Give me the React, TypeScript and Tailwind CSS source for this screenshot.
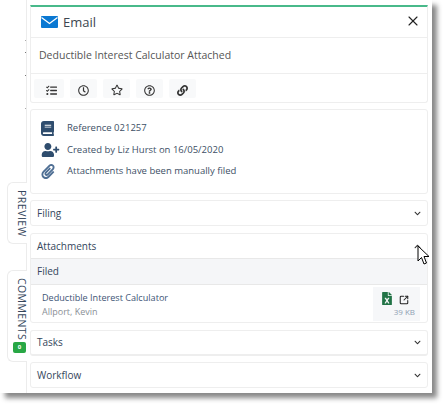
import React from "react";
import { FaBook, FaUserPlus, FaPaperclip, FaTasks, FaRegClock, FaRegStar, FaRegQuestionCircle, FaLink, FaChevronDown, FaChevronUp, FaFileExcel } from "react-icons/fa";
import { X, SquareArrowOutUpRight } from "lucide-react";

function Row({ title, open, height = "h-[26px]", className = "" }: { title: string; open?: boolean; height?: string; className?: string }) {
  return (
    <div className={`flex ${height} items-center justify-between pl-[6px] pr-[6px] ${className}`}>
      <span className="text-[10px] font-medium text-[#34465c]">{title}</span>
      {open ? <FaChevronUp className="h-[7px] w-[7px] text-[#333]" /> : <FaChevronDown className="h-[7px] w-[7px] text-[#333]" />}
    </div>
  );
}

const tool = "flex h-[19px] items-center justify-center rounded-[2px] bg-[#f8f9fa] pt-[3px] text-[#333]";

export default function App() {
  return (
    <div className="h-[405px] w-[444px] bg-white font-['Open_Sans',sans-serif]">
      <div className="flex h-[393px] w-[432px] bg-white shadow-[5px_5px_5px_#888888]">
        <div className="flex w-[30px] shrink-0 flex-col">
          <div className="h-[182px] w-[27px] border-r border-[#ececec]" />
          <div className="ml-[7px] flex h-[62px] w-[20px] items-center justify-center rounded-l-[6px] border border-r-0 border-[#ececec] bg-white pl-[4px]">
            <span className="ml-[3px] text-[10.5px] font-medium tracking-[0.5px] text-[#34465c] [writing-mode:vertical-rl]">PREVIEW</span>
          </div>
          <div className="h-[26px] w-[27px] border-r border-[#ececec]" />
          <div className="ml-[7px] flex h-[92px] w-[20px] flex-col items-center rounded-l-[6px] border border-r-0 border-[#ececec] bg-white pl-[4px] pt-[7px]">
            <span className="ml-[3px] text-[10.5px] font-medium leading-[15px] tracking-[0.4px] text-[#34465c] [writing-mode:vertical-rl]">COMMENTS</span>
            <span className="mt-[2px] flex h-[11px] w-[13px] items-center justify-center rounded-[2px] bg-[#28a745] text-[6px] font-bold text-white">0</span>
          </div>
          <div className="w-[27px] flex-1 border-r border-[#ececec]" />
        </div>

        <div className="flex w-[398px] flex-col pt-[5px]">
          <div className="h-[98px] rounded-b-[3px] border-x border-b border-t-[2px] border-[#eeeeee] border-t-[#48b98a]">
            <div className="flex h-[31px] items-center justify-between border-b border-[#eeeeee] pl-[10px] pr-[6px]">
              <div className="flex items-center gap-[5px]">
                <svg width="17" height="12" viewBox="0 0 17 12">
                  <rect width="17" height="12" rx="1" fill="#0a78d2" />
                  <path d="M0.5 1.5 L8.5 7.5 L16.5 1.5" fill="none" stroke="#fff" strokeWidth="1.3" />
                </svg>
                <span className="pt-[1px] text-[13px] text-[#3c4650]">Email</span>
              </div>
              <X className="mb-[3px] h-[16px] w-[16px] text-[#222]" strokeWidth={1.7} />
            </div>
            <div className="flex h-[36px] items-center border-b border-[#eeeeee] pl-[8px] pt-[1px] text-[10.5px] text-[#555]">
              Deductible Interest Calculator Attached
            </div>
            <div className="flex items-center gap-[6px] pl-[3px] pt-[5px]">
              <div className={`${tool} w-[30px] pl-[5px]`}><FaTasks className="h-[11px] w-[11px]" /></div>
              <div className={`${tool} w-[27px]`}><FaRegClock className="h-[11px] w-[11px]" /></div>
              <div className={`${tool} w-[27px]`}><FaRegStar className="h-[12px] w-[12px]" /></div>
              <div className={`${tool} w-[27px]`}><FaRegQuestionCircle className="h-[11px] w-[11px]" /></div>
              <div className={`${tool} w-[27px]`}><FaLink className="h-[11px] w-[11px]" /></div>
            </div>
          </div>

          <div className="mt-[6px] flex h-[85px] flex-col rounded-[3px] border border-[#eeeeee] pl-[10px] pt-[8px] text-[#3d4f66]">
            <div className="flex h-[21px] items-center">
              <FaBook className="h-[15px] w-[13px] text-[#2f4d6e]" />
              <span className="ml-[13px] text-[9.5px]">Reference 021257</span>
            </div>
            <div className="flex h-[22px] items-center">
              <FaUserPlus className="h-[14px] w-[19px] text-[#2f4d6e]" />
              <span className="ml-[7px] text-[9.5px]">Created by Liz Hurst on 16/05/2020</span>
            </div>
            <div className="flex h-[21px] items-center">
              <FaPaperclip className="h-[15px] w-[14px] text-[#4f6f94]" />
              <span className="ml-[12px] text-[9.5px]">Attachments have been manually filed</span>
            </div>
          </div>

          <Row title="Filing" className="mt-[6px] rounded-[3px] border border-[#eeeeee]" />

          <div className="mt-[7px] h-[90px] rounded-[3px] border border-[#eeeeee]">
            <Row title="Attachments" open height="h-[24px]" />
            <div className="flex h-[27px] items-center border-y border-[#e8e8e8] bg-[#f5f6f8] pl-[6px] text-[10px] font-medium text-[#34465c]">Filed</div>
            <div className="flex h-[37px] items-center justify-between pl-[11px] pr-[7px]">
              <div className="flex flex-col pt-[2px]">
                <span className="text-[9.1px] font-medium leading-[14px] text-[#3d5475]">Deductible Interest Calculator</span>
                <span className="text-[9px] leading-[14px] text-[#8a8f96]">Allport, Kevin</span>
              </div>
              <div className="flex h-[34px] w-[47px] flex-col items-end bg-[#f6f7f9] pr-[5px] pt-[5px]">
                <div className="flex items-start gap-[7px] pr-[6px]">
                  <FaFileExcel className="h-[13px] w-[10px] text-[#217346]" />
                  <SquareArrowOutUpRight className="mt-[3px] h-[10px] w-[10px] text-[#222]" strokeWidth={2.5} />
                </div>
                <span className="mt-[1px] text-[8px] leading-[12px] text-[#8fa0b3]">39 KB</span>
              </div>
            </div>
          </div>

          <Row title="Tasks" className="mt-[7px] rounded-[3px] border border-[#eeeeee] border-b-2" />
          <Row title="Workflow" className="mt-[6px] rounded-[3px] border border-[#eeeeee]" />
        </div>
      </div>
      <svg className="absolute left-[417px] top-[245px]" width="13" height="22" viewBox="0 0 13 22">
        <path d="M1 1 L1 16 L4.5 12.5 L7 19 L9.5 18 L7 11.5 L12 11.5 Z" fill="#fff" stroke="#000" strokeWidth="1" />
      </svg>
      <span className="absolute left-[25px] top-[40px] h-px w-px bg-[#aaa]" />
      <span className="absolute left-[25px] top-[52px] h-px w-px bg-[#777]" />
      <span className="absolute left-[25px] top-[75px] h-px w-px bg-[#777]" />
      <span className="absolute left-[25px] top-[108px] h-px w-px bg-[#aaa]" />
    </div>
  );
}
